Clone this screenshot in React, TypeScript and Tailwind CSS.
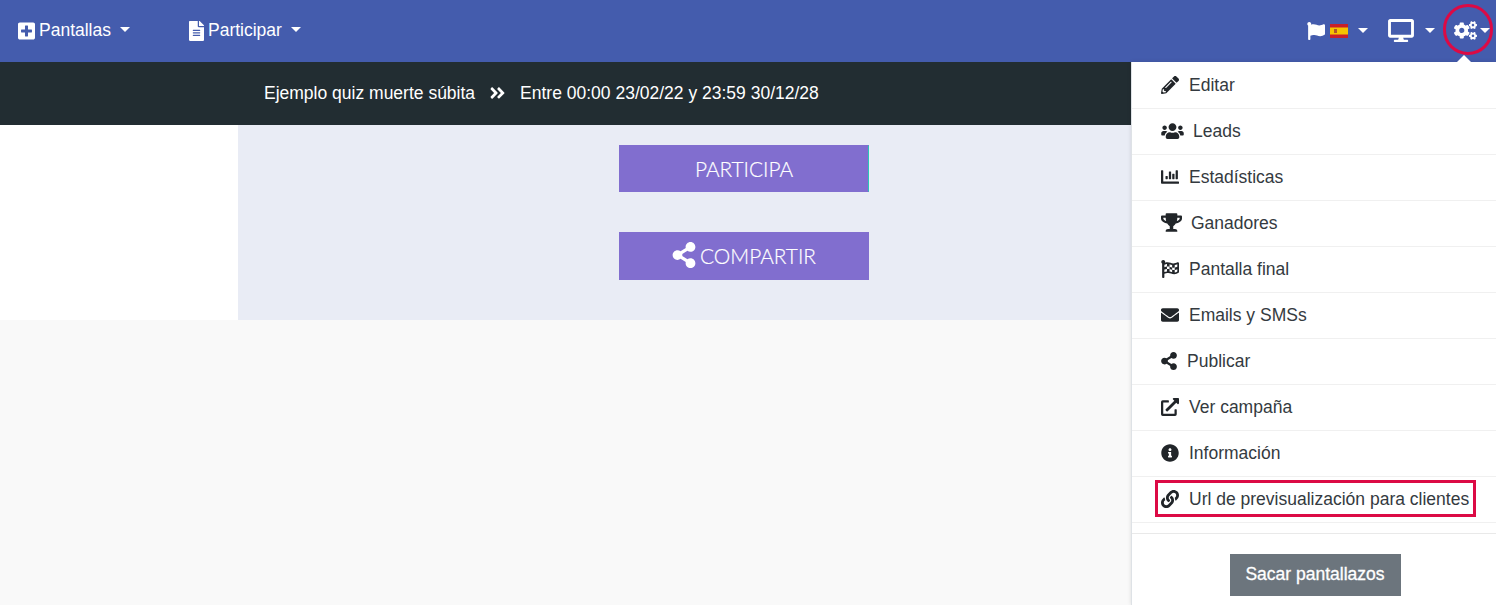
import React from "react";
import {
  FaPlusSquare, FaFileAlt, FaFlag, FaDesktop, FaCogs, FaPencilAlt, FaUsers, FaChartBar,
  FaTrophy, FaFlagCheckered, FaEnvelope, FaShareAlt, FaExternalLinkAlt, FaInfoCircle, FaLink, FaAngleDoubleRight,
} from "react-icons/fa";

const Caret = ({ className = "" }: { className?: string }) => (
  <span className={`inline-block w-0 h-0 border-x-[5px] border-x-transparent border-t-[5px] border-t-white ${className}`} />
);

const items = [
  { icon: FaPencilAlt, label: "Editar", w: 18, gap: 10, h: 18 },
  { icon: FaUsers, label: "Leads", w: 23, gap: 9, h: 18 },
  { icon: FaChartBar, label: "Estadísticas", w: 18, gap: 10, h: 18 },
  { icon: FaTrophy, label: "Ganadores", w: 21, gap: 9, h: 19 },
  { icon: FaFlagCheckered, label: "Pantalla final", w: 18, gap: 10, h: 18 },
  { icon: FaEnvelope, label: "Emails y SMSs", w: 18, gap: 10, h: 18 },
  { icon: FaShareAlt, label: "Publicar", w: 16, gap: 10, h: 18 },
  { icon: FaExternalLinkAlt, label: "Ver campaña", w: 18, gap: 10, h: 18 },
  { icon: FaInfoCircle, label: "Información", w: 18, gap: 10, h: 18 },
  { icon: FaLink, label: "Url de previsualización para clientes", w: 18, gap: 10, h: 18 },
];

export default function App() {
  return (
    <div className="relative h-[605px] overflow-hidden bg-[#f9f9f9] font-['Liberation_Sans',Arial,sans-serif] text-white">
      <nav className="h-[62px] bg-[#445cad] flex items-center pl-[18px] pr-[6px] pb-[1px] text-[17.5px]">
        <div className="flex items-center">
          <FaPlusSquare className="w-[17px] h-[20px] mr-[4px]" />
          <span>Pantallas</span>
          <Caret className="ml-[9px] mb-[2px]" />
        </div>
        <div className="flex items-center ml-[59px]">
          <FaFileAlt className="w-[15px] h-[20px] mr-[4px]" />
          <span>Participar</span>
          <Caret className="ml-[9px] mb-[2px]" />
        </div>
        <div className="flex items-center ml-auto">
          <FaFlag className="w-[18px] h-[18px] mr-[5px]" />
          <svg width="18" height="14" viewBox="0 0 18 14" className="mr-[10px]">
            <rect width="18" height="14" fill="#c8202a" />
            <rect y="3.5" width="18" height="7" fill="#f6c400" />
            <rect x="4" y="5" width="3" height="4" fill="#b0552a" />
          </svg>
          <Caret className="mr-[20px]" />
          <FaDesktop className="w-[26px] h-[23px] mr-[11px]" />
          <Caret className="mr-[19px]" />
          <FaCogs className="w-[23px] h-[19px]" />
          <Caret className="ml-[3px]" />
        </div>
      </nav>

      <div className="h-[63px] bg-[#222d32] flex items-center pl-[264px] pb-[1px] text-[17.5px]">
        <span>Ejemplo quiz muerte súbita</span>
        <FaAngleDoubleRight className="w-[17px] h-[18px] mx-[14px]" />
        <span>Entre 00:00 23/02/22 y 23:59 30/12/28</span>
      </div>

      <main className="grid grid-cols-[238px_1fr_238px] h-[195px] bg-white">
        <div />
        <div className="bg-[#e9ecf5] flex flex-col items-center pt-[20px] pr-[8px] font-['Lato',sans-serif] font-light text-[20.8px] [-webkit-text-stroke:0.2px_white]">
          <button className="w-[250px] h-[47px] bg-[#816ecf] border border-[#816ecf] border-r-[#2cc4b8] flex items-center justify-center">
            PARTICIPA
          </button>
          <button className="w-[250px] h-[48px] mt-[40px] bg-[#816ecf] flex items-center justify-center gap-[4px]">
            <FaShareAlt className="w-[24px] h-[26px] mb-[2px]" />
            COMPARTIR
          </button>
        </div>
        <div />
      </main>

      <div className="absolute left-[1131px] top-[62px] w-[365px] h-[543px] bg-white border-l border-l-[#dee2e6] pt-[1px] text-[#343a40] text-[17.5px] shadow-[0_0_4px_rgba(0,0,0,0.12)]">
        <ul>
          {items.map(({ icon: Icon, label, w, gap, h }) => (
            <li key={label} className="h-[46px] flex items-center pl-[29px] border-b border-b-[#f0f0f0]">
              <Icon className="shrink-0 mb-[2px] text-[#212529]" style={{ width: w, height: h, marginRight: gap }} />
              <span>{label}</span>
            </li>
          ))}
        </ul>
        <div className="mt-[10px] border-t border-t-[#e9e9e9] flex justify-center pt-[20px] pl-[2px]">
          <button className="w-[171px] h-[42px] pb-[1px] bg-[#6c757d] text-white text-[17.5px] [-webkit-text-stroke:0.3px_white] flex items-center justify-center">
            Sacar pantallazos
          </button>
        </div>
      </div>

      <span className="absolute left-[1457px] top-[55px] w-0 h-0 border-x-[7px] border-x-transparent border-b-[7px] border-b-white" />
      <div className="absolute left-[1443px] top-[4px] w-[50px] h-[51px] rounded-full border-[3px] border-[#dc0a45]" />
      <div className="absolute left-[1155px] top-[480px] w-[321px] h-[37px] border-[3px] border-[#dc0a45]" />
    </div>
  );
}
